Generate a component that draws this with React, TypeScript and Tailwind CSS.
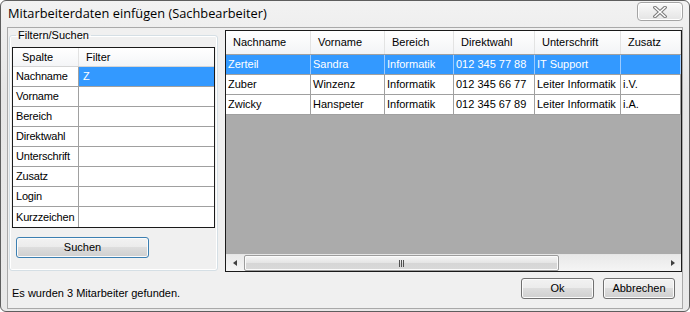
import React from "react";

const btn =
  "flex items-center justify-center rounded-[3px] border text-[11px] text-black bg-[linear-gradient(to_bottom,#f2f2f2_0%,#ebebeb_50%,#dddddd_50%,#cfcfcf_100%)] shadow-[inset_0_0_0_1px_#fbfbfb]";

const filterRows = ["Nachname", "Vorname", "Bereich", "Direktwahl", "Unterschrift", "Zusatz", "Login", "Kurzzeichen"];

const columns = [
  { title: "Nachname", w: "w-[85px]" },
  { title: "Vorname", w: "w-[74px]" },
  { title: "Bereich", w: "w-[69px]" },
  { title: "Direktwahl", w: "w-[81px]" },
  { title: "Unterschrift", w: "w-[86px]" },
  { title: "Zusatz", w: "flex-1" },
];

const people = [
  ["Zerteil", "Sandra", "Informatik", "012 345 77 88", "IT Support", ""],
  ["Zuber", "Winzenz", "Informatik", "012 345 66 77", "Leiter Informatik", "i.V."],
  ["Zwicky", "Hanspeter", "Informatik", "012 345 67 89", "Leiter Informatik", "i.A."],
];

function CloseButton() {
  return (
    <div className="mr-[6px] mt-[1px] flex h-[19px] w-[46px] items-center justify-center rounded-[4px] border border-[#a4a4a4] bg-[linear-gradient(to_bottom,#fafafa,#e4e4e4)] shadow-[inset_0_0_0_1px_#ffffff]">
      <svg width="14" height="12" viewBox="0 0 14 12">
        <path d="M2 1.5 L12 10.5 M12 1.5 L2 10.5" stroke="#7c7c7c" strokeWidth="3.6" strokeLinecap="square" />
        <path d="M2 1.5 L12 10.5 M12 1.5 L2 10.5" stroke="#ffffff" strokeWidth="1.4" strokeLinecap="square" />
      </svg>
    </div>
  );
}

function FilterGrid() {
  return (
    <div className="mt-[5px] w-[203px] border border-[#1a1a1a] bg-white">
      <div className="flex h-[19px] border-b border-[#d5d5d5] bg-[linear-gradient(to_bottom,#ffffff,#f4f5f7)]">
        <div className="flex w-[66px] items-center border-r border-[#e2e2e2] pl-[9px]">Spalte</div>
        <div className="flex flex-1 items-center pl-[7px]">Filter</div>
      </div>
      {filterRows.map((r, i) => (
        <div key={r} className="flex h-[20px] border-b border-[#a0a0a0] last:border-b-0">
          <div className="flex w-[66px] items-center overflow-hidden whitespace-nowrap border-r border-[#a0a0a0] pl-[3px] tracking-[-0.2px]">
            {r}
          </div>
          <div className={"flex flex-1 items-center pl-[4px] " + (i === 0 ? "bg-[#3399ff] text-white" : "")}>
            {i === 0 ? "Z" : ""}
          </div>
        </div>
      ))}
    </div>
  );
}

function ResultGrid() {
  return (
    <div className="ml-[7px] mt-[2px] flex h-[242px] w-[458px] flex-col border border-[#1a1a1a] bg-[#ababab]">
      <div className="flex h-[24px] shrink-0 border-b border-[#a0a0a0] bg-[linear-gradient(to_bottom,#ffffff,#f3f4f6)]">
        {columns.map((c) => (
          <div key={c.title} className={"flex items-center border-r border-[#e3e3e3] pl-[7px] " + c.w}>
            {c.title}
          </div>
        ))}
      </div>
      {people.map((p, i) => (
        <div
          key={p[0]}
          className={"flex h-[20px] shrink-0 border-b border-[#a0a0a0] " + (i === 0 ? "bg-[#3399ff] text-white" : "bg-white")}
        >
          {p.map((v, j) => (
            <div
              key={j}
              className={
                "flex items-center border-r pl-[2px] whitespace-nowrap " +
                (i === 0 ? "border-[#9ccbff] " : "border-[#a0a0a0] ") +
                columns[j].w
              }
            >
              {v}
            </div>
          ))}
        </div>
      ))}
      <div className="flex-1" />
      {/* horizontal scrollbar */}
      <div className="flex h-[17px] shrink-0 border-t border-[#e6e6e6] bg-[linear-gradient(to_bottom,#e9e9e9,#f5f5f5)]">
        <div className="flex w-[18px] items-center justify-center">
          <div className="h-0 w-0 border-y-[3.5px] border-r-[4px] border-y-transparent border-r-[#404040]" />
        </div>
        <div className="flex w-[315px] items-center justify-center rounded-[2px] border border-[#9c9c9c] bg-[linear-gradient(to_bottom,#f6f6f6,#e4e4e4_50%,#d6d6d6_51%,#d9d9d9)] shadow-[inset_0_0_0_1px_#fbfbfb]">
          <div className="flex gap-[1px]">
            <div className="h-[7px] w-[1px] bg-[#505050]" />
            <div className="h-[7px] w-[1px] bg-[#505050]" />
            <div className="h-[7px] w-[1px] bg-[#505050]" />
          </div>
        </div>
        <div className="flex-1" />
        <div className="flex w-[17px] items-center justify-center">
          <div className="h-0 w-0 border-y-[3.5px] border-l-[4px] border-y-transparent border-l-[#404040]" />
        </div>
      </div>
    </div>
  );
}

export default function App() {
  return (
    <div className="h-[312px] w-[690px] bg-white font-['Liberation_Sans',Arial,sans-serif] text-[11px] text-black">
      <div className="flex h-full w-full flex-col rounded-[6px] border border-[#5e5e5e] bg-[linear-gradient(to_bottom,#f2f2f2,#e6e6e6_30%,#e9e9e9)]">
        <div className="flex h-[26px] shrink-0 items-start justify-between">
          <div className="pl-[7px] pt-[4px] font-['Open_Sans','Noto_Sans',sans-serif] text-[12.8px] leading-[17px] text-black">
            Mitarbeiterdaten einfügen (Sachbearbeiter)
          </div>
          <CloseButton />
        </div>
        <div className="mx-[6px] flex h-[282px] shrink-0 flex-col border border-[#a9a9a9] bg-[#f0f0f0]">
          <div className="flex items-start">
            <fieldset className="ml-[1px] mt-[1px] h-[242px] w-[208px] rounded-[3px] border border-[#d5dfe5] px-[2px] shadow-[inset_0_0_0_1px_#ffffff]">
              <legend className="ml-[4px] px-[2px] leading-[13px]">Filtern/Suchen</legend>
              <FilterGrid />
              <button className={btn + " ml-[4px] mt-[9px] h-[21px] w-[133px] border-[#3c7fb1]"}>Suchen</button>
            </fieldset>
            <ResultGrid />
          </div>
          <div className="flex items-start justify-between">
            <div className="pl-[4px] pt-[13px]">Es wurden 3 Mitarbeiter gefunden.</div>
            <div className="mr-[7px] mt-[6px] flex gap-[9px]">
              <button className={btn + " h-[21px] w-[73px] border-[#707070]"}>Ok</button>
              <button className={btn + " h-[21px] w-[72px] border-[#707070]"}>Abbrechen</button>
            </div>
          </div>
        </div>
      </div>
    </div>
  );
}
